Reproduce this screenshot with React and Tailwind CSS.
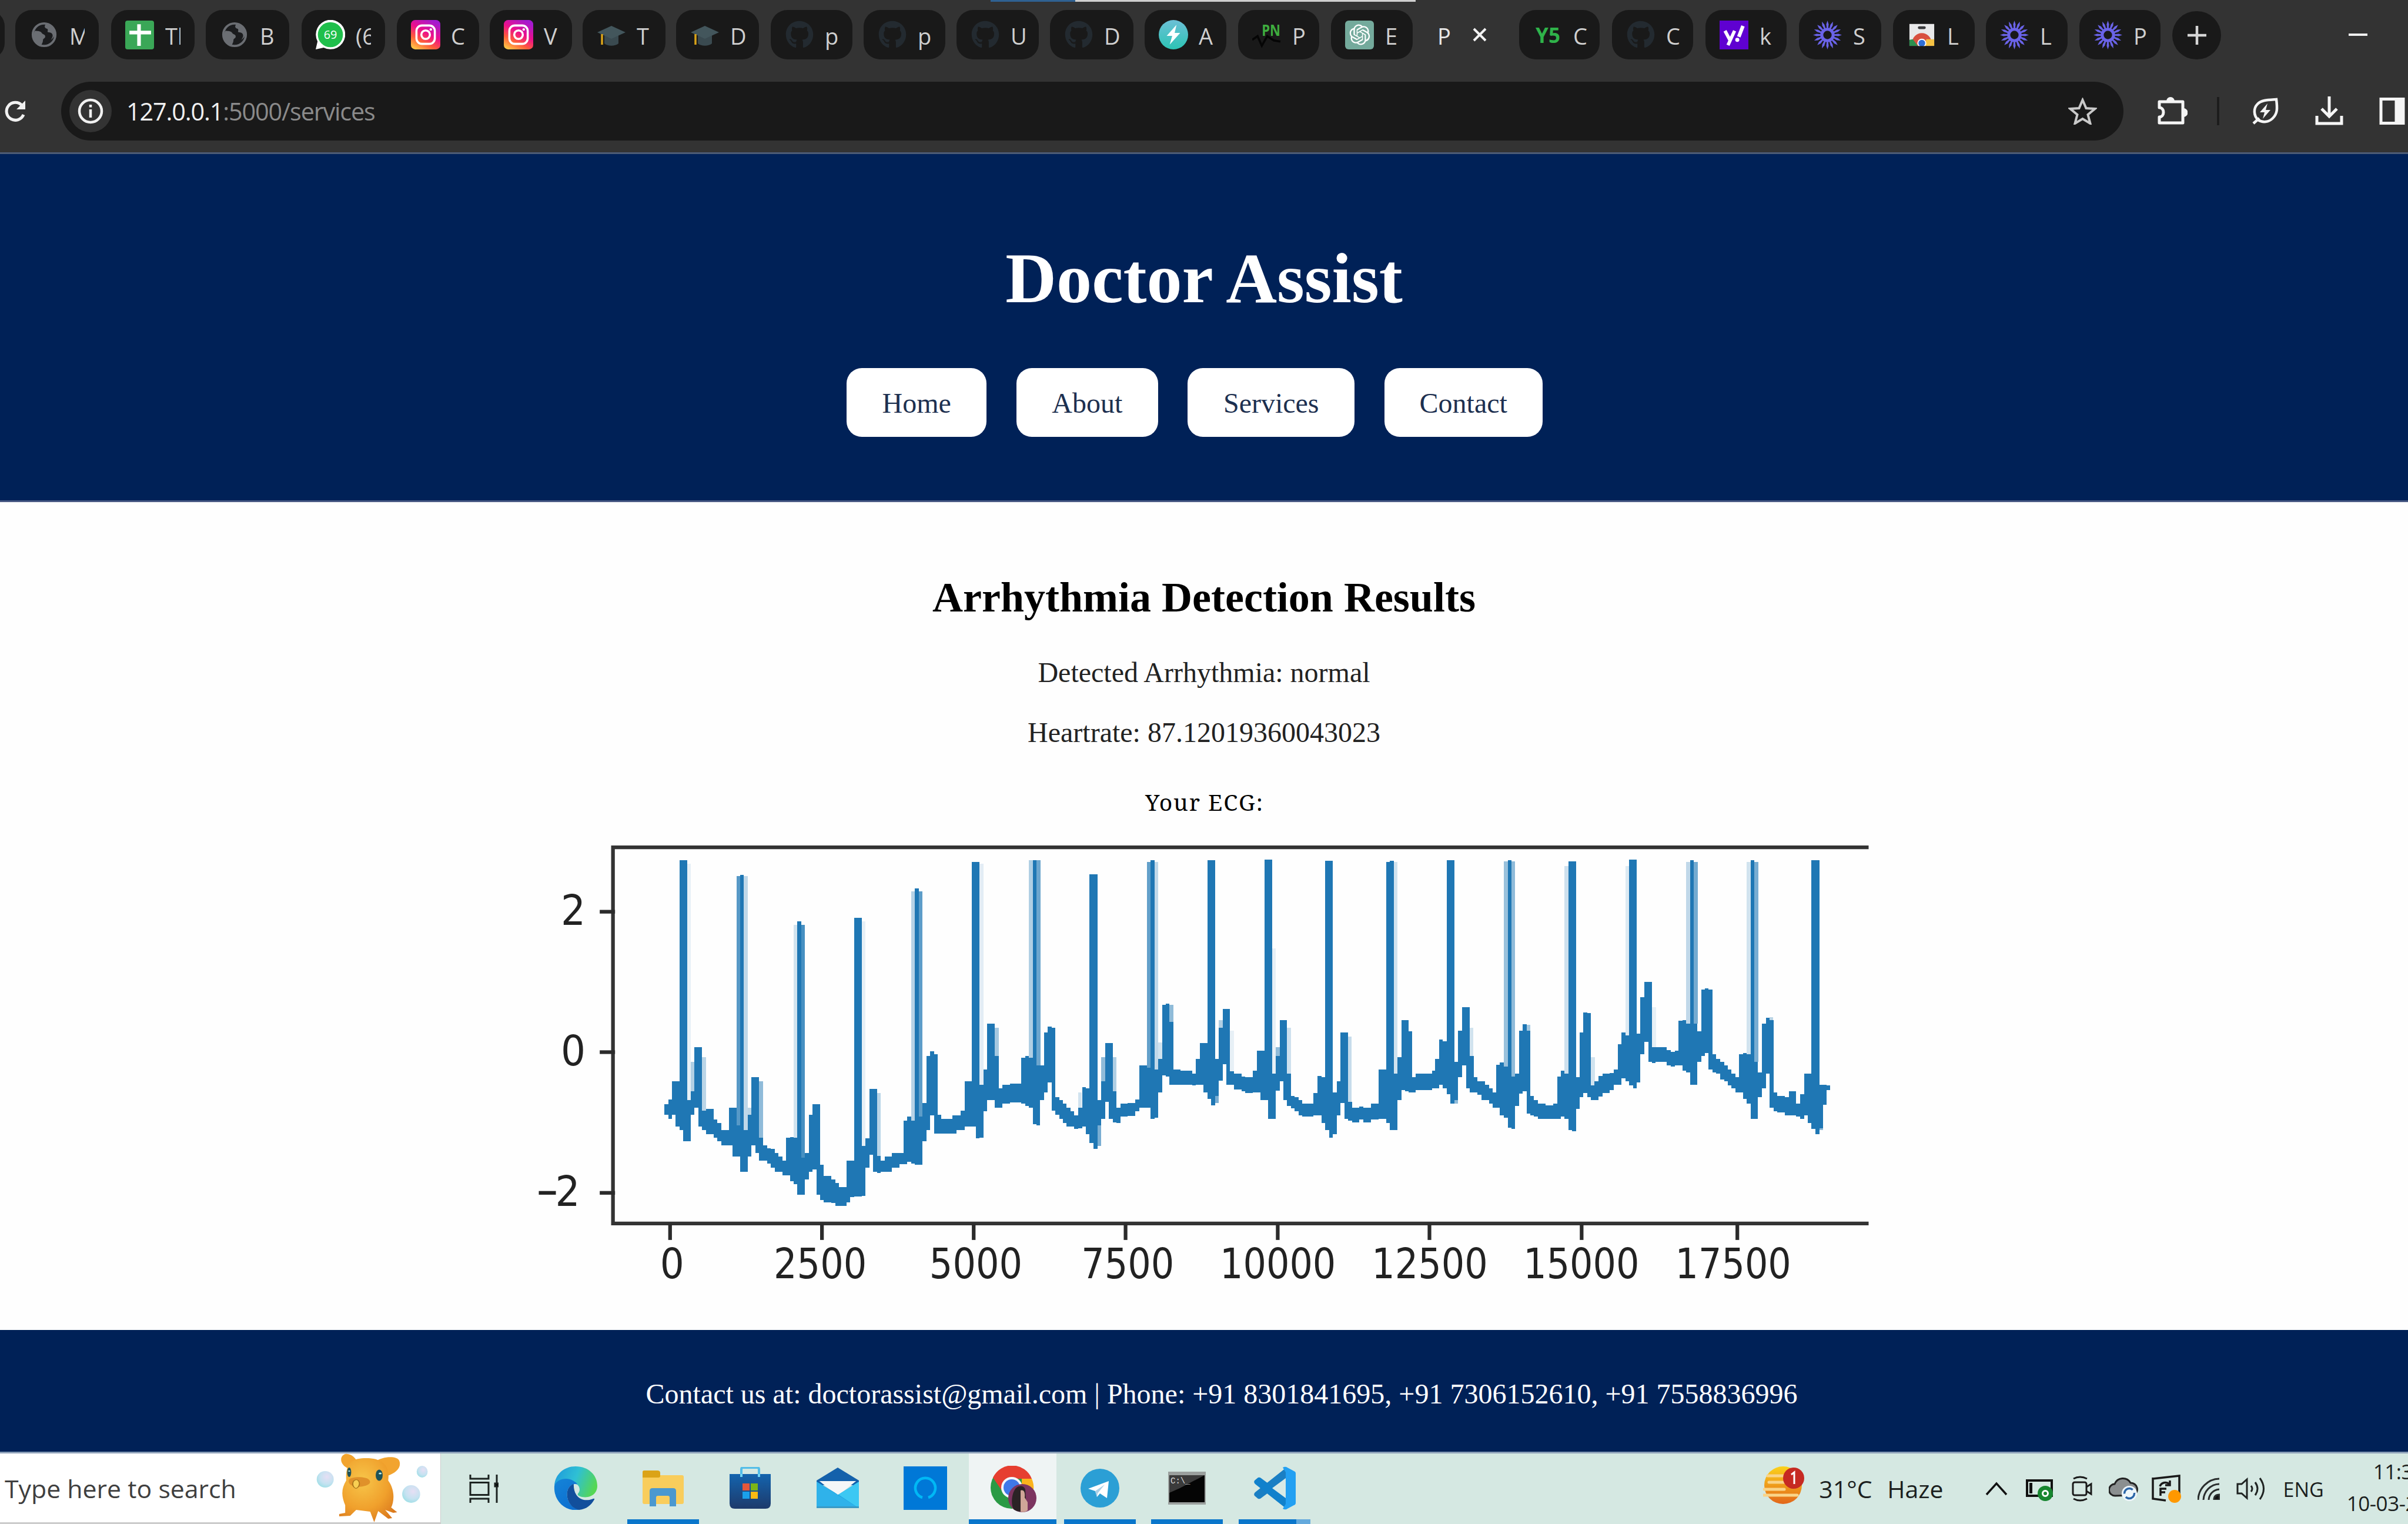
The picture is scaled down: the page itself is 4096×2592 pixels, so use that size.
import React from "react";
import { FaGithub } from "react-icons/fa";
import { RiOpenaiFill } from "react-icons/ri";

/* ---------- favicons ---------- */
const Globe = () => (
  <svg viewBox="0 0 48 48" className="size-[46px]">
    <circle cx="24" cy="24" r="20" fill="#1b1c1e" stroke="#6b6e73" strokeWidth="4" />
    <path d="M8 17c5 1 9 0 12 4 2 3 6 2 6 6s-4 3-4 7-2 6-3 9C10 40 4 32 4 24zM27 5c-3 4-2 7 1 8 3 0 3 3 2 6 4 2 7 0 9 5 1 3-1 6-3 9 5-3 8-9 7-14C42 11 36 6 27 5z" fill="#6b6e73" />
  </svg>
);
const Sheets = () => (
  <svg viewBox="0 0 48 48" className="size-[49px]">
    <rect width="48" height="48" rx="4" fill="#3aa757" />
    <path d="M20 6h6v36h-6zM7 17h36v6H7z" fill="#fff" />
  </svg>
);
const Whats = () => (
  <svg viewBox="0 0 48 48" className="size-[50px]">
    <path d="M0 48l3-13A24 24 0 1 1 13 45z" fill="#fff" />
    <circle cx="24" cy="24" r="20.5" fill="#1fbf4b" />
    <text x="24" y="31" fontSize="19" fontFamily="Open Sans, sans-serif" textAnchor="middle" fill="#fff">69</text>
  </svg>
);
const Insta = () => (
  <svg viewBox="0 0 48 48" className="size-[50px]">
    <defs>
      <linearGradient id="ig" x1="0.15" y1="1" x2="0.7" y2="0">
        <stop offset="0" stopColor="#ffc847" /><stop offset=".3" stopColor="#ff5d3a" />
        <stop offset=".6" stopColor="#ec0f8c" /><stop offset="1" stopColor="#a31ad0" />
      </linearGradient>
    </defs>
    <rect width="48" height="48" rx="7" fill="url(#ig)" />
    <rect x="9" y="9" width="30" height="30" rx="9" fill="none" stroke="#fff" strokeWidth="3.4" />
    <circle cx="24" cy="24" r="7" fill="none" stroke="#fff" strokeWidth="3.4" />
    <circle cx="32.5" cy="15.5" r="2" fill="#fff" />
  </svg>
);
const Grad = () => (
  <svg viewBox="0 0 48 48" className="size-[48px]">
    <path d="M12 22v17c6 5 18 5 24 0V22z" fill="#3a4a50" />
    <path d="M24 9l24 11-24 11L0 20z" fill="#43565c" />
    <path d="M8 23v18" stroke="#d8a319" strokeWidth="3.5" />
  </svg>
);
const Git = () => <FaGithub className="size-[48px] text-[#232a30]" />;
const Bolt = () => (
  <svg viewBox="0 0 48 48" className="size-[50px]">
    <defs><linearGradient id="bt" x1="0" y1="0" x2="0" y2="1"><stop offset="0" stopColor="#6cc0d6" /><stop offset="1" stopColor="#2cc4b4" /></linearGradient></defs>
    <circle cx="24" cy="24" r="24" fill="url(#bt)" />
    <path d="M29 8L13 26h9l-4 14 17-19h-9z" fill="#fff" />
  </svg>
);
const PN = () => (
  <svg viewBox="0 0 48 48" className="size-[49px]">
    <path d="M0 32l9-6 7 16 9-16 11 7 11 2" fill="none" stroke="#050505" strokeWidth="3.5" />
    <text x="16" y="25" fontSize="26" fontWeight="700" fontFamily="Open Sans, sans-serif" fill="#3fae3f" textLength="31" lengthAdjust="spacingAndGlyphs">PN</text>
  </svg>
);
const Gpt = () => (
  <div className="flex size-[49px] items-center justify-center rounded-[6px] bg-[#74aa9c]">
    <RiOpenaiFill className="size-[42px] text-white" />
  </div>
);
const Y5 = () => (
  <svg viewBox="0 0 48 48" className="size-[49px]">
    <text x="4" y="37" fontSize="35" fontWeight="700" fontFamily="Open Sans, sans-serif" fill="#2fb34a" textLength="41" lengthAdjust="spacingAndGlyphs">Y5</text>
  </svg>
);
const Yahoo = () => (
  <svg viewBox="0 0 48 48" className="size-[49px]">
    <rect width="48" height="48" fill="#5f01d1" />
    <path d="M9 17l8 15M25 17l-11 24" stroke="#fff" strokeWidth="5.5" />
    <path d="M39 9l-7 18" stroke="#fff" strokeWidth="6" />
    <circle cx="29.500" cy="32" r="3.4" fill="#fff" />
  </svg>
);
const Burst = () => (
  <svg viewBox="-24 -24 48 48" className="size-[49px]">
    {Array.from({ length: 16 }, (_, i) => (
      <path key={i} d="M-1 -9L-2 -18L0 -24L2 -18L1 -9z" fill="#6a63e8" transform={`rotate(${i * 22.5})`} />
    ))}
    <circle r="9.500" fill="none" stroke="#6a63e8" strokeWidth="5" />
  </svg>
);
const WebStore = () => (
  <svg viewBox="0 0 48 48" className="size-[46px]">
    <path d="M2 5h44v39H2z" fill="#e9e9ea" />
    <rect x="17" y="9" width="14" height="5" rx="2.500" fill="#3a3a3c" />
    <path d="M7 44V38a17 17 0 0 1 34 0v6z" fill="#d8503f" />
    <path d="M2 44V33l6-1 9 12z" fill="#2c8f4e" />
    <path d="M46 44V32H32l-3 12z" fill="#f6c344" />
    <circle cx="24" cy="39" r="8" fill="#fff" />
    <circle cx="24" cy="39" r="6" fill="#2f6fd6" />
    <path d="M0 44h48v4H0z" fill="#191919" />
  </svg>
);

/* [left edge, right edge, icon, title] */
const TABS = [
  [-134, 8, Globe, ""],
  [26, 168, Globe, "M"],
  [189, 331, Sheets, "Tl"],
  [350, 492, Globe, "B"],
  [513, 655, Whats, "(6"],
  [675, 815, Insta, "C"],
  [833, 973, Insta, "V"],
  [991, 1132, Grad, "T"],
  [1150, 1291, Grad, "D"],
  [1311, 1450, Git, "p"],
  [1469, 1608, Git, "p"],
  [1627, 1767, Git, "U"],
  [1786, 1928, Git, "D"],
  [1947, 2086, Bolt, "A"],
  [2106, 2244, PN, "P"],
  [2264, 2403, Gpt, "E"],
  [2423, 2565, null, "P"],
  [2584, 2721, Y5, "C"],
  [2742, 2880, Git, "C"],
  [2901, 3039, Yahoo, "k"],
  [3060, 3200, Burst, "S"],
  [3220, 3359, WebStore, "L"],
  [3378, 3517, Burst, "L"],
  [3537, 3675, Burst, "P"],
];

function Tab({ tab, prevEnd }) {
  const [start, end, Icon, title] = tab;
  const box = { marginLeft: start - prevEnd, width: end - start };
  if (!Icon) {
    return (
      <div className="flex h-full shrink-0 items-center pl-[22px]" style={box}>
        <span className="w-[59px] pt-[3px] text-[38px] leading-[52px] text-[#e8e8e8]">{title}</span>
        <svg viewBox="0 0 24 24" className="ml-px size-[24px]"><path d="M2 2l20 20M22 2L2 22" stroke="#f2f2f2" strokeWidth="4" /></svg>
      </div>
    );
  }
  const clip = title === "M" || title.length > 1 ? "w-[26px] overflow-x-clip" : "w-[34px]";
  return (
    <div className="flex h-full shrink-0 items-center rounded-[28px] bg-[#191919] pl-[23px]" style={box}>
      <div className="flex w-[51px] shrink-0 items-center justify-center"><Icon /></div>
      <span className={`${clip} ml-[18px] whitespace-nowrap pt-[3px] text-[38px] leading-[52px] text-[#cfcfcf]`}>{title}</span>
    </div>
  );
}

function Browser() {
  return (
    <div className="h-[262px] shrink-0 border-b-[3px] border-[#4d5b75] bg-[#333333]">
      <div className="flex h-[101px] items-stretch pt-[17px]">
        {TABS.map((t, i) => (
          <Tab key={i} tab={t} prevEnd={i ? TABS[i - 1][1] : 0} />
        ))}
        <div className="ml-[20px] flex h-[82px] w-[83px] items-center justify-center self-end rounded-full bg-[#191919]">
          <svg viewBox="0 0 32 32" className="size-[32px]"><path d="M16 0v32M0 16h32" stroke="#d6d6d6" strokeWidth="4.500" /></svg>
        </div>
        <div className="ml-[217px] mt-[40px] h-[4px] w-[32px] bg-[#f0f0f0]" />
      </div>
      <div className="mt-[38px] flex h-[100px] items-center">
        <svg viewBox="0 0 38 40" className="ml-[6px] mt-[2px] size-[40px] shrink-0">
          <path d="M33 25A15 15 0 1 1 30 9" fill="none" stroke="#f1f1f1" strokeWidth="5" />
          <path d="M36 1v15H21z" fill="#f1f1f1" />
        </svg>
        <div className="ml-[58px] flex h-full w-[3508px] items-center rounded-full bg-[#191919]">
          <div className="ml-[14px] flex size-[72px] items-center justify-center rounded-full bg-[#333333]">
            <svg viewBox="0 0 44 44" className="size-[44px]">
              <circle cx="22" cy="22" r="19" fill="none" stroke="#f1f1f1" strokeWidth="4.500" />
              <path d="M22 19v14M22 11v4.500" stroke="#f1f1f1" strokeWidth="4.500" />
            </svg>
          </div>
          <div className="ml-[25px] text-[41.4px] leading-[60px] tracking-[-1.15px] text-[#f0f0f0]">
            127.0.0.1<span className="text-[#8a8a8a]">:5000/services</span>
          </div>
          <svg viewBox="0 0 48 46" className="ml-auto mr-[45px] h-[46px] w-[49px]">
            <path d="M24 4l6 14 15 1-12 10 4 15-13-8-13 8 4-15L3 19l15-1z" fill="none" stroke="#c9c9c9" strokeWidth="4" />
          </svg>
        </div>
        <svg viewBox="0 0 52 52" className="ml-[57px] size-[52px] shrink-0">
          <path d="M4 10h40v36H4V36c4 0 7-3 7-8s-3-8-7-8z" fill="none" stroke="#f5f5f5" strokeWidth="5" strokeLinejoin="round" />
          <path d="M17 9a6 6 0 0 1 12 0zM45 22a6.500 6.500 0 0 1 0 13z" fill="#f5f5f5" stroke="#f5f5f5" strokeWidth="2" />
        </svg>
        <div className="ml-[50px] h-[48px] w-[4px] shrink-0 bg-[#1c1c1c]" />
        <svg viewBox="0 0 48 48" className="ml-[54px] size-[48px] shrink-0">
          <path d="M43 4c2 16 2 24-6 32-7 7-17 8-25 3C4 31 4 19 11 12 18 5 28 5 43 4z" fill="none" stroke="#f5f5f5" strokeWidth="4.500" />
          <path d="M4 45l10-9" stroke="#f5f5f5" strokeWidth="4.500" />
          <path d="M28 11L15 26h8l-3 11 13-15h-8z" fill="#f5f5f5" />
        </svg>
        <svg viewBox="0 0 48 50" className="ml-[61px] h-[50px] w-[48px] shrink-0">
          <path d="M24 0v34M11 21l13 13 13-13M3 33v13h42V33" fill="none" stroke="#f5f5f5" strokeWidth="5" />
        </svg>
        <svg viewBox="0 0 43 46" className="ml-[61px] h-[46px] w-[44px] shrink-0">
          <path d="M2.500 2.500h38v41h-38z" fill="none" stroke="#f5f5f5" strokeWidth="5" />
          <path d="M26 2h15v42H26z" fill="#f5f5f5" />
        </svg>
      </div>
    </div>
  );
}

/* ---------- ECG plot ---------- */
/* Each column: [x, top, bottom]; it runs to the next column's x. */
const WAVE_A = [[534,928,965],[547,912,978],[559,850,965],[572,850,1004],[585,100,1017],[598,100,1055],[611,914,1055],[623,885,965],[636,735,940],[650,735,1004],[662,950,1017],[675,945,1030],[701,980,1043],[714,992,1055],[727,1017,1068],[753,940,1068],[766,940,1107],[779,1000,1107],[791,150,1158],[804,1017,1158],[817,965,1107],[830,837,1068],[843,837,1094],[856,1043,1120],[869,1068,1120],[882,1078,1130],[895,1081,1145],[908,1094,1158],[921,1107,1158],[934,1120,1170],[947,1043,1170],[960,1040,1190],[972,1043,1200],[985,308,1236],[998,1110,1236],[1011,1094,1184],[1024,965,1158],[1037,928,1150],[1050,928,1236],[1062,1135,1255],[1075,1172,1262],[1101,1184,1265],[1114,1197,1274],[1127,1210,1274],[1152,1120,1262],[1165,1120,1245],[1178,295,1243],[1204,1070,1240],[1217,1045,1145],[1230,876,1100],[1243,876,1158],[1256,1105,1163],[1269,1120,1158],[1282,1107,1158],[1307,1094,1145],[1333,1094,1132],[1346,985,1132],[1359,970,1125],[1372,985,1130],[1385,195,1135],[1398,970,1135],[1411,925,1055],[1424,765,1017],[1437,750,966],[1450,760,1028],[1463,965,1028],[1475,978,1028],[1513,966,1028],[1526,966,1017],[1540,950,1017],[1553,850,1004]];
const WAVE_B = [[64,850,1004],[89,105,1004],[102,105,1045],[115,862,1043],[128,810,953],[141,655,914],[154,655,914],[167,765,940],[180,875,940],[193,862,927],[218,858,922],[257,772,927],[270,765,935],[283,772,940],[296,100,996],[309,797,1000],[321,797,914],[334,685,889],[347,665,855],[360,670,950],[373,905,965],[386,914,978],[399,927,992],[411,940,1004],[424,953,1004],[437,966,1012],[450,940,1010],[464,870,1004],[477,875,1030],[489,147,1060],[502,147,1081],[515,914,1000],[527,850,978],[541,721,920],[554,721,978],[567,885,990],[580,940,992],[593,927,970],[618,925,968],[644,912,953],[657,797,940],[683,805,940],[696,100,978],[709,810,975],[722,775,889],[735,592,830],[748,588,835],[760,650,862],[773,811,862],[798,815,862],[837,824,865],[850,775,862],[863,721,862],[876,721,889],[889,100,910],[902,100,933],[915,775,900],[928,670,848],[941,605,792],[954,605,862],[966,816,862],[980,824,878],[1005,835,885],[1018,837,890],[1044,815,888],[1057,747,888],[1070,747,914],[1083,98,914],[1096,98,978],[1109,824,978],[1122,765,882],[1135,643,850],[1148,643,914],[1160,824,935],[1173,901,942],[1186,904,953],[1199,914,966],[1212,927,970],[1250,890,966],[1263,832,966],[1276,837,992],[1289,102,1017],[1302,102,1043],[1315,888,1030],[1328,850,966],[1341,685,925],[1354,685,978],[1366,920,985],[1380,940,990],[1405,937,980],[1418,940,990],[1444,927,980],[1470,811,978],[1496,105,992],[1509,102,1017],[1522,824,1017],[1535,770,914],[1548,643,880]];
const WAVE_C = [[-8,643,885],[4,682,888],[16,837,888],[28,824,880],[80,815,875],[90,775,875],[103,710,862],[115,715,875],[128,100,895],[140,100,927],[152,785,915],[165,680,837],[177,600,797],[190,600,875],[202,765,888],[215,837,888],[227,850,897],[240,850,914],[252,862,914],[264,875,927],[277,888,940],[288,795,940],[300,788,966],[313,800,975],[325,100,1008],[337,835,1012],[349,825,935],[361,680,892],[374,657,885],[386,680,960],[398,900,966],[410,914,970],[423,927,978],[448,932,978],[472,927,978],[485,835,978],[497,815,970],[509,824,978],[521,103,1017],[534,103,1020],[546,837,945],[558,685,905],[570,618,890],[582,620,905],[594,865,914],[606,850,914],[618,832,902],[632,824,890],[655,822,880],[668,811,862],[681,725,862],[693,685,840],[706,695,850],[718,98,865],[730,98,875],[742,690,855],[754,566,760],[767,514,718],[780,514,785],[792,735,790],[804,735,785],[840,745,797],[853,752,800],[866,747,797],[878,645,797],[890,643,815],[903,655,820],[915,100,862],[927,655,862],[939,682,785],[951,540,765],[963,535,755],[975,540,811],[988,760,820],[1000,775,825],[1012,785,845],[1025,797,850],[1037,811,865],[1049,824,875],[1062,837,888],[1074,760,888],[1086,755,910],[1099,760,927],[1111,100,978],[1123,785,978],[1135,820,905],[1148,655,875],[1160,635,825],[1172,643,940],[1185,888,952],[1197,901,956],[1222,905,966],[1235,885,966],[1258,927,970],[1272,895,978],[1284,824,966],[1296,824,992],[1308,100,1012],[1320,100,1030],[1333,862,1010],[1345,862,930],[1357,865,880],[1369,0,0]];
const U_B = 1489.5;
const U_C = 3057.6;
const COLS = [
  ...WAVE_A.slice(0, -1),
  ...WAVE_B.map(([x, a, b]) => [x + U_B, a, b]),
  ...WAVE_C.map(([x, a, b]) => [x * 1.05 + U_C, a, b]),
];
const wavePath = COLS.slice(0, -1)
  .map(([x, top, bot], i) => `M${x} ${top}H${COLS[i + 1][0]}V${bot}H${x}z`)
  .join("");

/* Paler pixels at the side of a stroke: [x, top, bottom, opacity] */
const FRINGE = [
  [611, 112, 914, 0.1], [623, 785, 885, 0.35], [662, 770, 950, 0.3], [779, 153, 1000, 0.75], [804, 153, 1017, 0.28],
  [856, 850, 1043, 0.5], [972, 320, 1043, 0.2], [998, 320, 1110, 0.82], [1204, 308, 1070, 0.1], [1256, 890, 1105, 0.3],
  [1372, 205, 985, 0.32], [1398, 205, 970, 0.72], [817, 940, 965, 0.3],
  ...[[115, 112, 862, 0.12], [167, 670, 765, 0.4], [283, 100, 772, 0.35], [309, 100, 797, 0.65], [360, 683, 700, 0.5], [515, 978, 1070, 0.6], [567, 770, 885, 0.35],
    [683, 105, 805, 0.7], [709, 105, 810, 0.28], [722, 720, 775, 0.2], [760, 592, 650, 0.5], [915, 900, 925, 0.6], [966, 680, 816, 0.1], [1109, 400, 824, 0.1],
    [1160, 670, 824, 0.22], [1366, 700, 920, 0.25], [1522, 105, 824, 0.2], [450, 888, 940, 0.2], [528, 770, 850, 0.5], [928, 643, 670, 0.35], [1122, 735, 765, 0.5]].map(([x, a, b, o]) => [x + U_B, a, b, o]),
  ...[[202, 670, 765, 0.2], [313, 103, 800, 0.45], [337, 103, 835, 0.5], [386, 660, 680, 0.4], [509, 120, 824, 0.22], [594, 770, 865, 0.2], [706, 120, 695, 0.15],
    [903, 105, 655, 0.28], [927, 105, 655, 0.62], [1099, 105, 760, 0.2], [1123, 105, 785, 0.6], [792, 600, 735, 0.1], [1172, 634, 643, 0.3], [152, 885, 927, 0.5], [1333, 960, 1017, 0.5]].map(([x, a, b, o]) => [x * 1.05 + U_C, a, b, o]),
];

const X_TICKS = [[553, "0", 560], [1069, "2500", 1063], [1584.5, "5000", 1592], [2100.5, "7500", 2108], [2617.5, "10000", 2618], [3133, "12500", 3134], [3650, "15000", 3649], [4179, "17500", 4165]];
const Y_TICKS = [[275, "2", 224], [752, "0", 224], [1230, "2", 205]];

function Ecg() {
  return (
    <svg viewBox="100 40 4540 1500" className="ml-[2px] mt-[42px] h-[751px] w-[2273px]" fontFamily="DejaVu Sans, sans-serif" fontSize="141">
      <g fill="#1f77b4" shapeRendering="crispEdges">
        {FRINGE.map(([x, a, b, o], i) => (
          <rect key={i} x={x} y={a} width="13" height={b - a} fillOpacity={o} />
        ))}
        <path d={wavePath} />
      </g>
      <path d="M4625 56H359V1334H4625" fill="none" stroke="#333" strokeWidth="12.500" />
      {X_TICKS.map(([x, label, cx]) => (
        <g key={label}>
          <path d={`M${x} 1334v56`} stroke="#2b2b2b" strokeWidth="12.500" />
          <text x={cx} y="1520" textAnchor="middle" fill="#222" textLength={label.length * 78 + 4} lengthAdjust="spacingAndGlyphs">{label}</text>
        </g>
      ))}
      {Y_TICKS.map(([y, label, cx]) => (
        <g key={y}>
          <path d={`M314 ${y}h52`} stroke="#2b2b2b" strokeWidth="12.500" />
          <text x={cx} y={y + 45} textAnchor="middle" fill="#222" textLength="84" lengthAdjust="spacingAndGlyphs">{label}</text>
        </g>
      ))}
      <path d="M107 1230h58" stroke="#222" strokeWidth="12.500" />
    </svg>
  );
}

/* ---------- page ---------- */
const NAV = [
  ["Home", "w-[238px]"],
  ["About", "w-[241px]"],
  ["Services", "w-[284px]"],
  ["Contact", "w-[269px]"],
];

function Page() {
  return (
    <div className="flex h-[2210px] shrink-0 flex-col bg-[#fefefe] font-['Liberation_Serif',serif]">
      <header className="h-[592px] shrink-0 border-b-[3px] border-[#4a5a85] bg-[#002157] pt-[142px] text-center">
        <h1 className="text-[120.2px] font-bold leading-[140px] text-white">Doctor Assist</h1>
        <nav className="mt-[82px] flex justify-center gap-[50.5px] pr-[32px]">
          {NAV.map(([label, w]) => (
            <a key={label} className={`${w} h-[117px] rounded-[26px] bg-white text-[48px] leading-[119px] text-[#1d3050]`}>{label}</a>
          ))}
        </nav>
      </header>
      <main className="flex flex-1 flex-col items-center pt-[122px]">
        <h2 className="text-[72px] font-bold leading-[80px] text-black">Arrhythmia Detection Results</h2>
        <p className="mt-[60px] text-[48px] leading-[56px] text-[#222]">Detected Arrhythmia: normal</p>
        <p className="mt-[46px] text-[48px] leading-[56px] text-[#222]">Heartrate: 87.12019360043023</p>
        <p className="mt-[65px] pl-[2px] font-['Noto_Serif','DejaVu_Serif',serif] text-[39px] leading-[50px] tracking-[1.9px] text-black">Your ECG:</p>
        <div className="mt-[2px]"><Ecg /></div>
      </main>
      <footer className="h-[210px] shrink-0 border-b-[3px] border-[#8c9fb8] bg-[#002157] pl-[60px] pt-[81px] text-center text-[48px] leading-[56px] text-white">
        Contact us at: doctorassist@gmail.com | Phone: +91 8301841695, +91 7306152610, +91 7558836996
      </footer>
    </div>
  );
}

/* ---------- taskbar ---------- */
const Creature = () => (
  <svg viewBox="0 0 140 118" className="h-[118px] w-[238px]" preserveAspectRatio="none">
    <defs>
      <radialGradient id="cr" cx=".4" cy=".35" r=".75"><stop offset="0" stopColor="#f7c64a" /><stop offset=".6" stopColor="#f0a02c" /><stop offset="1" stopColor="#d9771c" /></radialGradient>
      <radialGradient id="bb" cx=".6" cy=".35" r=".7"><stop offset="0" stopColor="#e6dff4" /><stop offset=".6" stopColor="#c6e2f1" /><stop offset="1" stopColor="#9edfe6" /></radialGradient>
    </defs>
    <g transform="translate(-6 0)">
      <path d="M56 26C46 20 46 4 52 1c8-2 14 14 14 26zM82 14c8-10 22-10 24-2 3 12-4 22-12 26z" fill="#f2a42f" />
      <path d="M52 88C48 72 48 60 53 46 52 14 60 8 73 8c16 0 24 12 22 38 7 16 6 36 3 46l6 8-4 1-8-5 7 14-4 1-10-13-4 19-4-18-14-3-6 10-11 1v-4l6-2z" fill="url(#cr)" />
      <path d="M56 44c4-5 17-5 20 1 4 8-6 12-12 12-7-1-10-8-8-13z" fill="#e0912a" />
      <path d="M60 48c2-5 5-4 6 1s-2 12-4 10-3-6-2-11z" fill="#f8cf53" stroke="#a8741a" strokeWidth="1" />
      <ellipse cx="56" cy="32" rx="2" ry="8" fill="#1f5257" /><ellipse cx="86" cy="37" rx="3.500" ry="9.500" fill="#1f5257" />
      <circle cx="56" cy="30" r="1" fill="#bff0f0" /><circle cx="87" cy="34" r="1.500" fill="#bff0f0" />
    </g>
    <ellipse cx="26" cy="44" rx="8.500" ry="14" fill="url(#bb)" /><ellipse cx="123" cy="31" rx="5.500" ry="10" fill="url(#bb)" /><ellipse cx="112" cy="69" rx="9" ry="15" fill="url(#bb)" />
  </svg>
);
const TaskView = () => (
  <svg viewBox="0 0 50 48" className="h-[48px] w-[50px]" fill="none" stroke="#1c2220" strokeWidth="3">
    <path d="M2 0v7h31V0M2 48v-7h31v7M2 13.500h31v21H2zM47 0v48" /><path d="M44 15h6v5h-6z" fill="#000" />
  </svg>
);
const Edge = () => (
  <svg viewBox="0 0 72 72" className="size-[74px]">
    <defs>
      <linearGradient id="e1" x1="0" y1="0.2" x2="1" y2="0.5"><stop offset="0" stopColor="#1f9bdc" /><stop offset=".5" stopColor="#2fc0d4" /><stop offset="1" stopColor="#55d753" /></linearGradient>
      <linearGradient id="e2" x1="0" y1="0" x2=".6" y2="1"><stop offset="0" stopColor="#1584d8" /><stop offset="1" stopColor="#0d6fcf" /></linearGradient>
    </defs>
    <path d="M36 0C58 0 72 15 72 32c0 12-9 19-20 19-9 0-14-3-12-6 6-6 2-18-10-18C15 22 4 26 1 32 2 13 17 0 36 0z" fill="url(#e1)" />
    <path d="M1 32C4 22 20 17 31 23c5 3 8 5 8 7-8-3-17 4-17 16 0 15 10 24 22 26C20 76-1 58 1 32z" fill="url(#e2)" />
    <path d="M33 29c-8 3-11 10-11 17 0 15 10 24 20 26 12-1 20-8 25-17 1-2-1-2-3-1-16 6-32-3-31-25z" fill="#124f9c" />
  </svg>
);
const Explorer = () => (
  <svg viewBox="0 0 70 62" className="h-[62px] w-[70px]">
    <path d="M0 4q0-3 3-3h22l5 8h37q3 0 3 3v43q0 3-3 3H3q-3 0-3-3z" fill="#f9cd5c" />
    <path d="M0 4q0-3 3-3h22q5 0 5 4v5q0 3-3 3H0z" fill="#dba318" />
    <path d="M12 62V36q0-5 5-5h35q5 0 5 5v26H46V47q0-3-3-3H26q-3 0-3 3v15z" fill="#4a98cf" />
  </svg>
);
const Store = () => (
  <svg viewBox="0 0 70 72" className="h-[72px] w-[70px]">
    <defs><linearGradient id="st" x1="0" y1="0" x2="0" y2="1"><stop offset="0" stopColor="#1464ae" /><stop offset="1" stopColor="#1d3a6b" /></linearGradient></defs>
    <path d="M20 14V4q0-3 3-3h24q3 0 3 3v10" fill="none" stroke="#53bde8" strokeWidth="4" />
    <path d="M0 12h70v50q0 9-9 9H9q-9 0-9-9z" fill="url(#st)" />
    <path d="M22 28h12v12H22z" fill="#e5573a" /><path d="M36 28h12v12H36z" fill="#7cb518" /><path d="M22 42h12v12H22z" fill="#1aa0ea" /><path d="M36 42h12v12H36z" fill="#fbb913" />
    <path d="M20 12v5M50 12v5" stroke="#6fd3f5" strokeWidth="4" />
  </svg>
);
const Mail = () => (
  <svg viewBox="0 0 72 70" className="h-[70px] w-[72px]">
    <path d="M36 0l36 22v8H0v-8z" fill="#1461ab" />
    <path d="M5 23h62L36 48z" fill="#f5f7f8" />
    <path d="M0 24l37 22L72 24v45H0z" fill="#1b9fe0" />
    <path d="M0 24l72 45H0z" fill="#2fb2ea" /><path d="M37 46L72 24v45z" fill="#3cc8f3" />
    <path d="M5 23h62L36 46z" fill="#f5f7f8" />
    <path d="M0 66h72v3H0z" fill="#3a9ac6" />
  </svg>
);
const Alexa = () => (
  <svg viewBox="0 0 74 74" className="size-[74px]">
    <path d="M0 0h74v74H0z" fill="#0078d7" />
    <path d="M32 53a17 17 0 1 1 10 0" fill="none" stroke="#00b8f5" strokeWidth="4.500" />
  </svg>
);
const Chrome = () => (
  <svg viewBox="0 0 80 80" className="ml-[4px] mt-[4px] size-[80px]">
    <circle cx="37" cy="37" r="36" fill="#2a9a45" />
    <path d="M5 20A36 36 0 0 1 71 22H38L20 42z" fill="#e63e30" />
    <path d="M71 22A36 36 0 0 1 38 73l16-27V22z" fill="#fbb31c" />
    <circle cx="37" cy="37" r="18" fill="#f3f6fb" /><circle cx="37" cy="37" r="14" fill="#3f78e8" />
    <circle cx="55" cy="55" r="24" fill="#7c3460" />
    <path d="M40 74c-5-10-3-28 4-36 6-6 14-4 16 2l2 36q-12 5-22-2z" fill="#2b2325" />
    <path d="M52 42c6-2 8 4 7 12l5 8v14q-6 4-12 2z" fill="#cfa598" />
  </svg>
);
const Telegram = () => (
  <svg viewBox="0 0 66 66" className="size-[66px]">
    <circle cx="33" cy="33" r="33" fill="#2b9fd5" />
    <path d="M13 34L48 21 45 50 33 42l-5 6-3-10z" fill="#fff" /><path d="M25 38l16-11-12 15-1 6z" fill="#a9cfe6" />
  </svg>
);
const Cmd = () => (
  <svg viewBox="0 0 64 56" className="h-[56px] w-[64px]">
    <path d="M0 0h64v56H0z" fill="#9ba09e" /><path d="M2 6h60v46H2z" fill="#050505" /><path d="M2 6h60L20 28 2 36z" fill="#3b3b3b" />
    <text x="4" y="20" fontSize="14" fontFamily="Liberation Mono, monospace" fill="#ddd">C:\_</text>
  </svg>
);
const Code = () => (
  <svg viewBox="0 0 72 74" className="h-[74px] w-[72px]">
    <path d="M2 50l6 5q3 1 5-1L56 22V2L3 44q-3 3-1 6z" fill="#1a7fc4" />
    <path d="M2 24l6-5q3-1 5 1l43 32v20L3 30q-3-3-1-6z" fill="#1181cc" />
    <path d="M50 2q3-2 6-1l13 7q3 1 3 4v50q0 3-3 4l-13 7q-3 1-6-1l5-8V10z" fill="#23a0f2" />
    <path d="M55 20v34L32 37z" fill="#d9eae6" />
  </svg>
);
const APPS = [
  [Edge, ""], [Explorer, "w-[122px] bg-[#0a76cb]"], [Store, ""], [Mail, ""], [Alexa, ""],
  [Chrome, "w-full bg-[#0a76cb]", "bg-[#eff4f4]"], [Telegram, "w-[122px] bg-[#0a76cb]"],
  [Cmd, "w-[122px] bg-[#0a76cb]"], [Code, "w-[122px] border-r-[24px] border-[#64a9dc] bg-[#0a76cb]"],
];

const Weather = () => (
  <svg viewBox="0 0 70 66" className="h-[66px] w-[70px]">
    <defs><linearGradient id="wt" x1="0" y1="0" x2="0" y2="1"><stop offset="0" stopColor="#fbd21c" /><stop offset="1" stopColor="#e2661a" /></linearGradient></defs>
    <circle cx="34" cy="33" r="32" fill="url(#wt)" />
    <path d="M8 17h30M10 28h32M2 40h34M0 50h58" stroke="#f9d489" strokeWidth="5" strokeLinecap="round" />
    <circle cx="52" cy="21" r="18" fill="#c62a22" />
    <path d="M48 15l5-4v20" fill="none" stroke="#fff" strokeWidth="3" />
  </svg>
);

function Taskbar() {
  return (
    <div className="flex h-[120px] shrink-0 bg-[#d5e8e2] font-['Open_Sans',sans-serif] text-[#1b1f1e]">
      <div className="flex w-[750px] shrink-0 items-center justify-between border-b-[3px] border-r border-[#cccccc] bg-white pl-[8px] pr-[2px]">
        <span className="whitespace-nowrap pt-[2px] text-[42.8px] leading-[60px] text-[#3f3f3f]">Type here to search</span>
        <Creature />
      </div>
      <div className="flex w-[155px] shrink-0 items-center pl-[48px]"><TaskView /></div>
      {APPS.map(([Icon, line, bg], i) => (
        <div key={i} className={`flex w-[148.6px] shrink-0 flex-col items-center pt-[5px] ${bg || ""}`}>
          <div className="flex flex-1 items-center"><Icon /></div>
          <div className={`h-[8px] ${line}`} />
        </div>
      ))}
      <div className="ml-[757px] flex shrink-0 items-center pb-[12px]"><Weather /></div>
      <div className="ml-[25px] flex shrink-0 items-center gap-[25px] text-[41px] leading-[60px]">
        <span className="w-[91px]">31°C</span><span>Haze</span>
      </div>
      <div className="ml-[71px] flex shrink-0 items-center">
        <svg viewBox="0 0 38 24" className="h-[24px] w-[38px]"><path d="M2 22L19 3l17 19" fill="none" stroke="#111" strokeWidth="3.500" /></svg>
        <svg viewBox="0 0 46 40" className="ml-[31px] mt-[4px] h-[40px] w-[46px]">
          <path d="M2 4h42v26H2z" fill="none" stroke="#111" strokeWidth="4" /><path d="M6 8h5v18H6z" fill="#111" />
          <circle cx="33" cy="26" r="13" fill="#17862f" /><circle cx="33" cy="26" r="4.500" fill="none" stroke="#fff" strokeWidth="3" />
        </svg>
        <svg viewBox="0 0 36 46" className="ml-[32px] h-[46px] w-[36px]" fill="none" stroke="#1a1a1a" strokeWidth="3">
          <rect x="2" y="12" width="23" height="22" rx="3" /><path d="M25 20l8-5v17l-8-5M3 6q11-6 23 0M3 40q11 6 23 0" />
        </svg>
        <svg viewBox="0 0 50 44" className="ml-[27px] h-[44px] w-[50px]">
          <path d="M11 34a10 10 0 0 1-1-20A15 15 0 0 1 37 12a11 11 0 0 1 5 21z" fill="#8b8f90" stroke="#222" strokeWidth="3" />
          <circle cx="35" cy="30" r="13" fill="#eef6fb" /><circle cx="35" cy="30" r="8.500" fill="none" stroke="#2b66a8" strokeWidth="3.500" strokeDasharray="20 6" />
        </svg>
        <svg viewBox="0 0 50 48" className="ml-[23px] h-[48px] w-[50px]">
          <path d="M2 7L47 2v32M2 5v36l22 3" fill="none" stroke="#1a1a1a" strokeWidth="3.500" />
          <path d="M15 36V24h10M15 30h8M14 20a10 10 0 0 1 16-4M31 10v8h-8" fill="none" stroke="#1a1a1a" strokeWidth="3.500" />
          <circle cx="39" cy="37" r="11" fill="#ff9800" />
        </svg>
        <svg viewBox="0 0 38 38" className="ml-[28px] h-[38px] w-[38px]" fill="none" stroke="#2a2e2d" strokeWidth="3">
          <path d="M1 38A37 37 0 0 1 37 2M10 38A28 28 0 0 1 37 11M19 38A19 19 0 0 1 37 20" /><path d="M28 38q0-9 9-9v9z" fill="#111" />
        </svg>
        <svg viewBox="0 0 50 44" className="ml-[28px] h-[44px] w-[50px]" fill="none" stroke="#1f2322" strokeWidth="3">
          <path d="M2 14h7l9-8v32l-9-8H2zM25 17q4 5 0 10M32 11q8 11 0 22M40 4q13 18 0 36" />
        </svg>
        <span className="ml-[30px] pt-[2px] text-[34px] leading-[50px]">ENG</span>
      </div>
      <div className="ml-[39px] flex w-[140px] shrink-0 flex-col pt-[4px] text-[35px] leading-[54px] tracking-[-0.5px]">
        <span className="pl-[45px]">11:39</span>
        <span className="whitespace-nowrap">10-03-2024</span>
      </div>
    </div>
  );
}

export default function App() {
  return (
    <div className="relative flex h-[2592px] w-[4096px] flex-col overflow-hidden bg-white font-['Open_Sans',sans-serif]">
      <Browser />
      <Page />
      <Taskbar />
      <div className="absolute left-[1685px] top-0 flex h-[3px] w-[723px] bg-[#cfcfcf]"><div className="w-[144px] bg-[#2f6192]" /></div>
    </div>
  );
}
